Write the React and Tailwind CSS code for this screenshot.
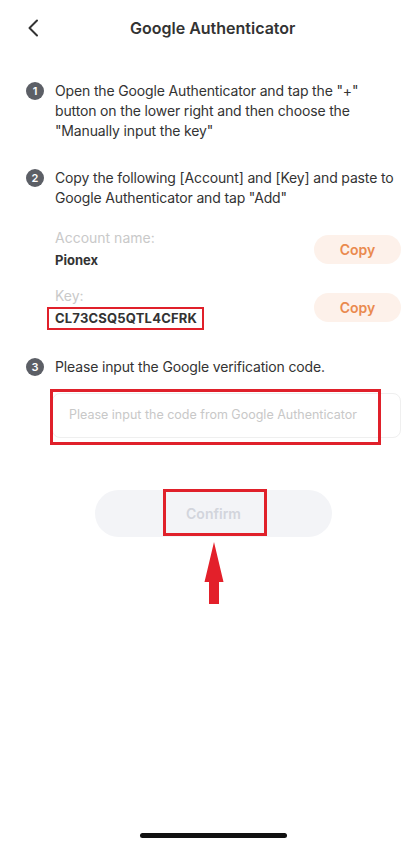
import React from 'react';

const font = { fontFamily: 'Inter, "Noto Sans", sans-serif' };

const Step = ({ n, children }) => (
    <div className="flex items-start">
        <div className="mt-[1px] flex h-[18px] w-[18px] shrink-0 items-center justify-center rounded-full bg-[#5c5f66] text-[11px] font-semibold text-white">
            {n}
        </div>
        <div className="ml-[11px] text-[14px] leading-[20px] text-[#333] tracking-[-0.15px]">{children}</div>
    </div>
);

const CopyButton = () => (
    <button className="flex h-[29px] w-[87px] items-center justify-center rounded-full bg-[#fdf1ea] text-[14px] font-semibold text-[#ea8a4e]">
        Copy
    </button>
);

export default function App() {
    return (
        <div className="relative h-[848px] w-[415px] overflow-hidden bg-white" style={font}>
            {/* Header */}
            <div className="flex h-[56px] items-center pl-[27px]">
                <svg width="12" height="18" viewBox="0 0 12 18" fill="none">
                    <path d="M10 1.5 L2.5 9 L10 16.5" stroke="#333" strokeWidth="2" strokeLinecap="round" strokeLinejoin="round" />
                </svg>
                <div className="ml-[91px] text-[16px] font-semibold text-[#333]">Google Authenticator</div>
            </div>

            {/* Steps */}
            <div className="pl-[26px] pr-[14px] pt-[25px]">
                <Step n="1">
                    Open the Google Authenticator and tap the "+" button on the lower right and then choose the "Manually input the key"
                </Step>

                <div className="mt-[27px]">
                    <Step n="2">Copy the following [Account] and [Key] and paste to Google Authenticator and tap "Add"</Step>
                </div>

                <div className="ml-[29px] mt-[20px] flex items-center justify-between">
                    <div>
                        <div className="text-[14px] leading-[20px] text-[#c9c9c9]">Account name:</div>
                        <div className="mt-[2px] text-[13px] font-bold leading-[20px] text-[#333]">Pionex</div>
                    </div>
                    <CopyButton />
                </div>

                <div className="ml-[29px] mt-[16px] flex items-center justify-between">
                    <div>
                        <div className="text-[14px] leading-[20px] text-[#c9c9c9]">Key:</div>
                        <div className="relative mt-[2px] text-[13px] font-bold leading-[20px] text-[#333] tracking-[0.2px]">
                            CL73CSQ5QTL4CFRK
                            <div className="absolute left-[-8px] top-[-1px] h-[23px] w-[157px] border-2 border-[#e0202a]" />
                        </div>
                    </div>
                    <CopyButton />
                </div>

                <div className="mt-[29px]">
                    <Step n="3">Please input the Google verification code.</Step>
                </div>

                <div className="relative ml-[26px] mt-[16px] flex h-[45px] items-center rounded-[8px] border border-[#efefef] pl-[16px]">
                    <span className="text-[12.5px] text-[#c8c8c8]">Please input the code from Google Authenticator</span>
                    <div className="absolute left-[-3px] top-[-5px] h-[56px] w-[331px] border-[3px] border-[#e0202a]" />
                </div>
            </div>

            {/* Confirm */}
            <div className="mt-[52px] flex justify-center pl-[12px]">
                <div className="relative flex h-[47px] w-[237px] items-center justify-center rounded-full bg-[#f3f4f7]">
                    <span className="text-[14px] font-semibold text-[#d2d5dc]">Confirm</span>
                    <div className="absolute left-[68px] top-[-1px] h-[47px] w-[104px] border-[3px] border-[#e0202a]" />
                </div>
            </div>

            {/* Arrow */}
            <div className="mt-[5px] flex justify-center pl-[12px]">
                <svg width="22" height="64" viewBox="0 0 22 64">
                    <path d="M11 0 L20.5 40 L16 40 L16 62 L6 62 L6 40 L1.5 40 Z" fill="#e3202a" />
                </svg>
            </div>

            {/* Home indicator */}
            <div className="absolute bottom-[10px] left-[140px] h-[5px] w-[147px] rounded-full bg-[#111]" />
        </div>
    );
}
